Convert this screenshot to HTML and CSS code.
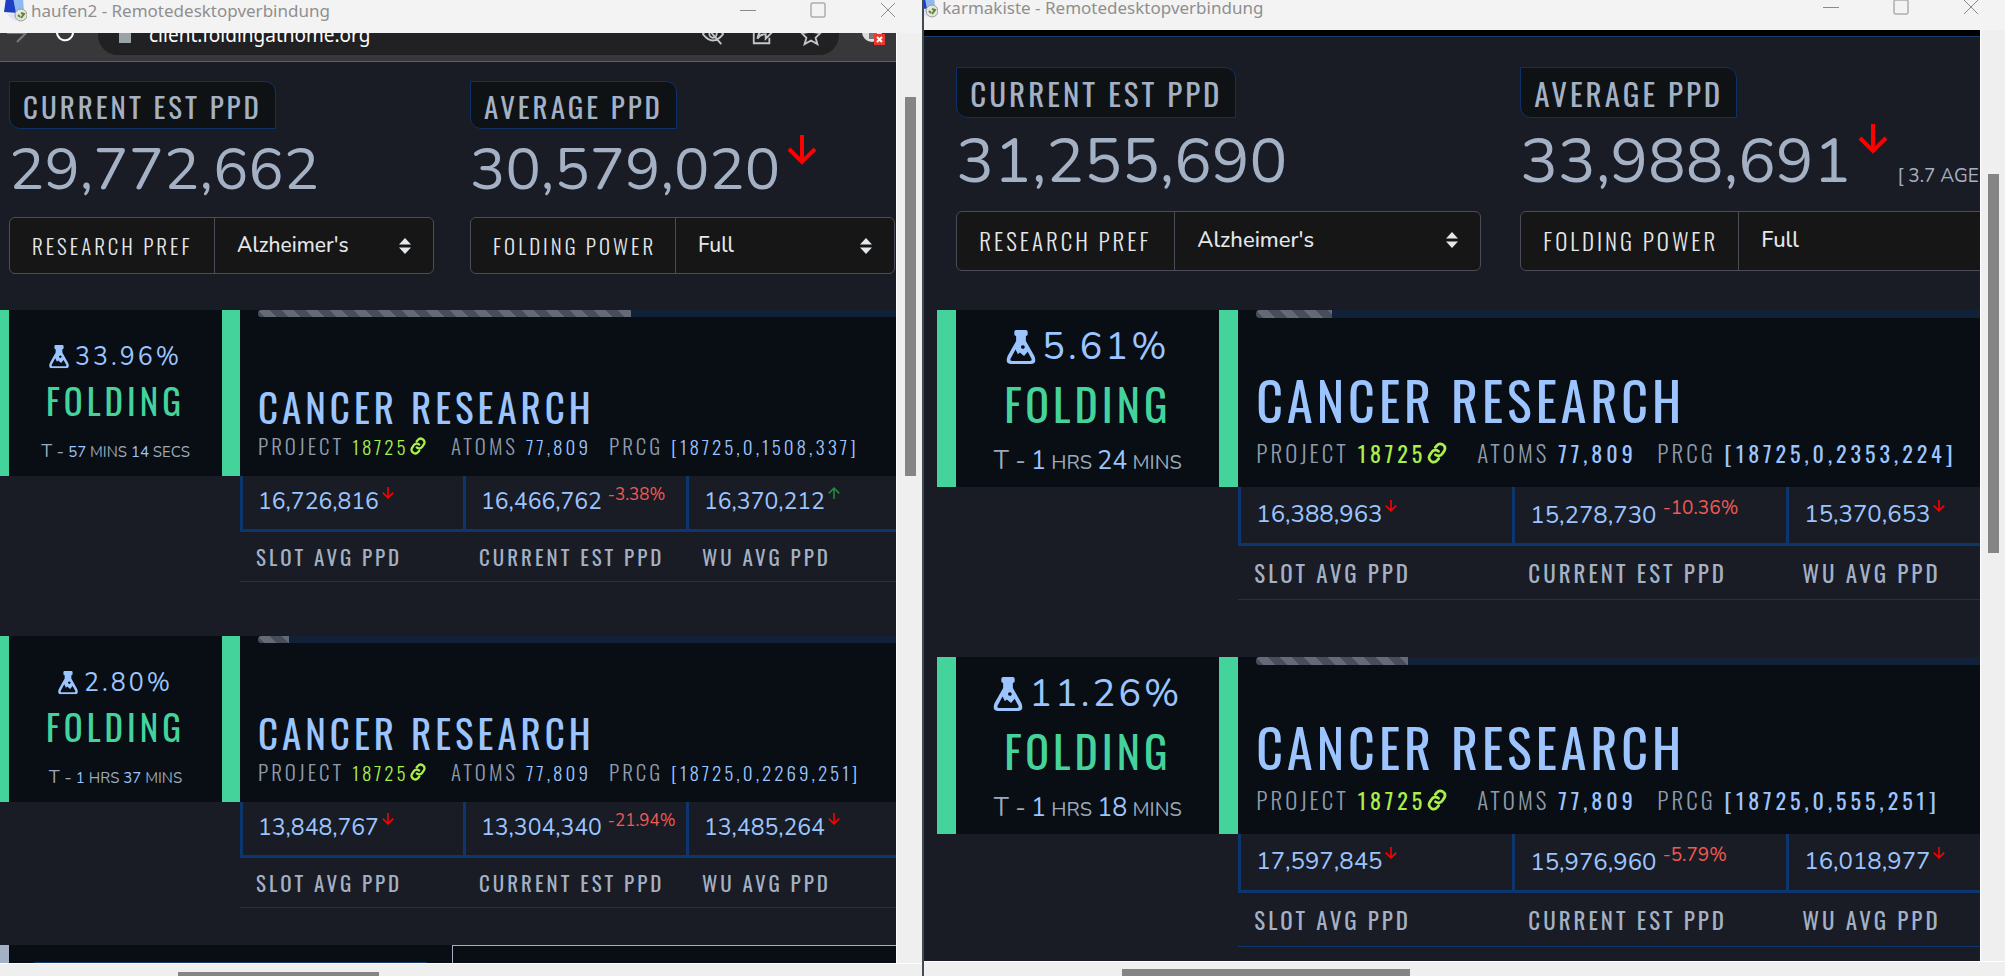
FILE: index.html
```
<!DOCTYPE html>
<html lang="de">

<head>
    <meta charset="UTF-8">
    <meta name="viewport" content="width=device-width, initial-scale=1.0">
    <title>Remotedesktopverbindung</title>
    <link rel="stylesheet" href="styles.css">
</head>

<body>
    <svg class="sprite" aria-hidden="true">
        <symbol id="flask" viewBox="0 0 24 28">
            <path fill-rule="evenodd" d="M8 0h8q1.500 0 1.500 1.500v2q0 1.500-1.500 1.500v4l7 12.500q2.500 6.500-3 6.500H4q-5.500 0-3-6.500L8 9V5Q6.500 5 6.500 3.500v-2Q6.500 0 8 0zM7.500 16l-4 7.500q-1 2 1.500 2h14q2.500 0 1.500-2l-3-5.500-3 3.500-3.500-3-1.500 1.500zM13.500 12.500a1.500 1.500 0 1 0 .1 0z" />
        </symbol>
        <symbol id="link" viewBox="0 0 24 24">
            <g fill="none" stroke="currentColor" stroke-width="3" stroke-linecap="round" transform="rotate(-12 12 12)">
                <path d="M10 13.500a5 5 0 0 0 7.500.5l3-3a5 5 0 0 0-7-7l-2 1.700" />
                <path d="M14 10.500a5 5 0 0 0-7.500-.5l-3 3a5 5 0 0 0 7 7l2-1.700" />
            </g>
        </symbol>
        <symbol id="arrow" viewBox="0 0 30 30">
            <path fill="none" stroke="currentColor" stroke-width="4" d="M15 0v27M2 14l13 13 13-13" />
        </symbol>
        <symbol id="sort" viewBox="0 0 12 16">
            <path d="M0 6.500L6 0l6 6.500zM0 9.500L6 16l6-6.500z" />
        </symbol>
        <symbol id="rdp" viewBox="0 0 24 24">
            <path fill="#dfe6f2" d="M4 17l9-3 8 5-9 4z" />
            <path fill="#1c3fc4" d="M3 0h9l3 15-14-1z" />
            <path fill="#8db9ee" d="M10 0h10l1 14-8 1z" />
            <circle cx="18" cy="17" r="6" fill="#e4e4e0" stroke="#9c9c98" />
            <path fill="none" stroke="#5a8a2c" stroke-width="2" d="M15 17l2 2M18 15l3 1-3 4" />
        </symbol>
        <symbol id="win-min" viewBox="0 0 16 16">
            <path fill="none" stroke="currentColor" d="M0 8.500h16" />
        </symbol>
        <symbol id="win-max" viewBox="0 0 16 16">
            <rect x="1" y="1" width="14" height="14" rx="1" fill="none" stroke="currentColor" />
        </symbol>
        <symbol id="win-close" viewBox="0 0 16 16">
            <path fill="none" stroke="currentColor" d="M1 1l14 14M15 1L1 15" />
        </symbol>
    </svg>

    <!-- haufen2 -->
    <section class="window haufen">
        <header class="titlebar">
            <svg class="app_icon"><use href="#rdp" /></svg>
            <h1>haufen2 - Remotedesktopverbindung</h1>
            <button type="button" aria-label="Minimieren"><svg><use href="#win-min" /></svg></button>
            <button type="button" aria-label="Maximieren"><svg><use href="#win-max" /></svg></button>
            <button type="button" aria-label="Schließen"><svg><use href="#win-close" /></svg></button>
        </header>
        <div class="viewport">
            <div class="toolbar">
                <svg class="forward" viewBox="0 0 20 20"><path d="M0 10h18M10 1l9 9-9 9" /></svg>
                <svg class="reload" viewBox="0 0 20 20"><path d="M18 10a8 8 0 1 1-3-7" /></svg>
                <div class="address">
                    <i class="lock"></i>
                    <span class="url">client.foldingathome.org</span>
                    <svg viewBox="0 0 24 24"><path d="M1 11q11-14 22 0Q12 25 1 11zM3 1l18 21" /><circle cx="12" cy="11" r="4" /></svg>
                    <svg viewBox="0 0 24 24"><path d="M9 4H3v17h17v-6M7 16q1-9 9-9V2l7 7-7 7v-5q-6 0-9 5z" /></svg>
                    <svg viewBox="0 0 24 24"><path d="M12 2l3 7 7 1-5 5 2 7-7-4-7 4 2-7-5-5 7-1z" /></svg>
                </div>
                <svg class="extension" viewBox="0 0 24 24">
                    <circle cx="11" cy="11" r="10" fill="#ddd" />
                    <path fill="#777" d="M8 4h8v14H8z" />
                    <path fill="#e33b32" d="M13 13h11v11H13z" />
                    <path stroke="#fff" stroke-width="2" d="M16 16l5 5M21 16l-5 5" />
                </svg>
            </div>
            <main class="page">
                <div class="summary">
                    <div>
                        <h2 class="tag">CURRENT EST PPD</h2>
                        <div class="total">29,772,662</div>
                        <div class="group">
                            <label for="pref1">RESEARCH PREF</label>
                            <div class="select">
                                <select id="pref1"><option>Alzheimer's</option></select>
                                <svg><use href="#sort" /></svg>
                            </div>
                        </div>
                    </div>
                    <div>
                        <h2 class="tag">AVERAGE PPD</h2>
                        <div class="total">30,579,020<svg class="down"><use href="#arrow" /></svg></div>
                        <div class="group">
                            <label for="power1">FOLDING POWER</label>
                            <div class="select">
                                <select id="power1"><option>Full</option></select>
                                <svg><use href="#sort" /></svg>
                            </div>
                        </div>
                    </div>
                </div>

                <article class="slot">
                    <div class="card">
                        <div class="status">
                            <div class="percent"><svg><use href="#flask" /></svg>33.96%</div>
                            <div class="state">FOLDING</div>
                            <div class="eta"><span>T -</span> <b>57</b> MINS <b>14</b> SECS</div>
                        </div>
                        <div class="work">
                            <div class="progress"><div style="width: 33.96%"></div></div>
                            <h3>CANCER RESEARCH</h3>
                            <div class="info">
                                <p>PROJECT <a href="#18725">18725<svg><use href="#link" /></svg></a></p>
                                <p>ATOMS <b>77,809</b></p>
                                <p>PRCG <b>[18725,0,1508,337]</b></p>
                            </div>
                        </div>
                    </div>
                    <table>
                        <tbody>
                            <tr>
                                <td>16,726,816<svg class="down"><use href="#arrow" /></svg></td>
                                <td>16,466,762 <sup>-3.38%</sup></td>
                                <td>16,370,212<svg class="up"><use href="#arrow" /></svg></td>
                            </tr>
                        </tbody>
                        <tfoot>
                            <tr>
                                <th>SLOT AVG PPD</th>
                                <th>CURRENT EST PPD</th>
                                <th>WU AVG PPD</th>
                            </tr>
                        </tfoot>
                    </table>
                </article>

                <article class="slot">
                    <div class="card">
                        <div class="status">
                            <div class="percent"><svg><use href="#flask" /></svg>2.80%</div>
                            <div class="state">FOLDING</div>
                            <div class="eta"><span>T -</span> <b>1</b> HRS <b>37</b> MINS</div>
                        </div>
                        <div class="work">
                            <div class="progress"><div style="width: 2.8%"></div></div>
                            <h3>CANCER RESEARCH</h3>
                            <div class="info">
                                <p>PROJECT <a href="#18725">18725<svg><use href="#link" /></svg></a></p>
                                <p>ATOMS <b>77,809</b></p>
                                <p>PRCG <b>[18725,0,2269,251]</b></p>
                            </div>
                        </div>
                    </div>
                    <table>
                        <tbody>
                            <tr>
                                <td>13,848,767<svg class="down"><use href="#arrow" /></svg></td>
                                <td>13,304,340 <sup>-21.94%</sup></td>
                                <td>13,485,264<svg class="down"><use href="#arrow" /></svg></td>
                            </tr>
                        </tbody>
                        <tfoot>
                            <tr>
                                <th>SLOT AVG PPD</th>
                                <th>CURRENT EST PPD</th>
                                <th>WU AVG PPD</th>
                            </tr>
                        </tfoot>
                    </table>
                </article>

                <div class="users">
                    <div class="user_left"><div class="user_box"></div></div>
                    <div class="user_right"></div>
                </div>
            </main>
        </div>
        <div class="scroll_y"><div class="thumb"></div></div>
        <div class="scroll_x"><div class="thumb"></div></div>
    </section>

    <!-- karmakiste -->
    <section class="window karma">
        <header class="titlebar">
            <svg class="app_icon"><use href="#rdp" /></svg>
            <h1>karmakiste - Remotedesktopverbindung</h1>
            <button type="button" aria-label="Minimieren"><svg><use href="#win-min" /></svg></button>
            <button type="button" aria-label="Maximieren"><svg><use href="#win-max" /></svg></button>
            <button type="button" aria-label="Schließen"><svg><use href="#win-close" /></svg></button>
        </header>
        <div class="viewport">
            <div class="navline"></div>
            <main class="page">
                <div class="summary">
                    <div>
                        <h2 class="tag">CURRENT EST PPD</h2>
                        <div class="total">31,255,690</div>
                        <div class="group">
                            <label for="pref2">RESEARCH PREF</label>
                            <div class="select">
                                <select id="pref2"><option>Alzheimer's</option></select>
                                <svg><use href="#sort" /></svg>
                            </div>
                        </div>
                    </div>
                    <div>
                        <h2 class="tag">AVERAGE PPD</h2>
                        <div class="total">33,988,691<svg class="down"><use href="#arrow" /></svg><small>[ 3.7 AGE ]</small></div>
                        <div class="group">
                            <label for="power2">FOLDING POWER</label>
                            <div class="select">
                                <select id="power2"><option>Full</option></select>
                                <svg><use href="#sort" /></svg>
                            </div>
                        </div>
                    </div>
                </div>

                <article class="slot">
                    <div class="card">
                        <div class="status">
                            <div class="percent"><svg><use href="#flask" /></svg>5.61%</div>
                            <div class="state">FOLDING</div>
                            <div class="eta"><span>T -</span> <b>1</b> HRS <b>24</b> MINS</div>
                        </div>
                        <div class="work">
                            <div class="progress"><div style="width: 5.61%"></div></div>
                            <h3>CANCER RESEARCH</h3>
                            <div class="info">
                                <p>PROJECT <a href="#18725">18725<svg><use href="#link" /></svg></a></p>
                                <p>ATOMS <b>77,809</b></p>
                                <p>PRCG <b>[18725,0,2353,224]</b></p>
                            </div>
                        </div>
                    </div>
                    <table>
                        <tbody>
                            <tr>
                                <td>16,388,963<svg class="down"><use href="#arrow" /></svg></td>
                                <td>15,278,730 <sup>-10.36%</sup></td>
                                <td>15,370,653<svg class="down"><use href="#arrow" /></svg></td>
                            </tr>
                        </tbody>
                        <tfoot>
                            <tr>
                                <th>SLOT AVG PPD</th>
                                <th>CURRENT EST PPD</th>
                                <th>WU AVG PPD</th>
                            </tr>
                        </tfoot>
                    </table>
                </article>

                <article class="slot">
                    <div class="card">
                        <div class="status">
                            <div class="percent"><svg><use href="#flask" /></svg>11.26%</div>
                            <div class="state">FOLDING</div>
                            <div class="eta"><span>T -</span> <b>1</b> HRS <b>18</b> MINS</div>
                        </div>
                        <div class="work">
                            <div class="progress"><div style="width: 11.26%"></div></div>
                            <h3>CANCER RESEARCH</h3>
                            <div class="info">
                                <p>PROJECT <a href="#18725">18725<svg><use href="#link" /></svg></a></p>
                                <p>ATOMS <b>77,809</b></p>
                                <p>PRCG <b>[18725,0,555,251]</b></p>
                            </div>
                        </div>
                    </div>
                    <table>
                        <tbody>
                            <tr>
                                <td>17,597,845<svg class="down"><use href="#arrow" /></svg></td>
                                <td>15,976,960 <sup>-5.79%</sup></td>
                                <td>16,018,977<svg class="down"><use href="#arrow" /></svg></td>
                            </tr>
                        </tbody>
                        <tfoot>
                            <tr>
                                <th>SLOT AVG PPD</th>
                                <th>CURRENT EST PPD</th>
                                <th>WU AVG PPD</th>
                            </tr>
                        </tfoot>
                    </table>
                </article>
            </main>
        </div>
        <div class="scroll_y"><div class="thumb"></div></div>
        <div class="scroll_x"><div class="thumb"></div></div>
    </section>
</body>

</html>
```
FILE: styles.css
```
* {
    margin: 0;
    padding: 0;
    box-sizing: border-box;
}

body {
    display: grid;
    grid-template-columns: 46fr 54fr;
    height: 100vh;
    overflow: hidden;
    background-color: #efefef;
    font-family: Nunito, Lato, "Open Sans", sans-serif;
}

h1,
h2,
h3,
b,
th {
    font-weight: normal;
}

svg {
    fill: currentColor;
    flex: none;
}

.sprite {
    position: absolute;
    width: 0;
    height: 0;
}

/* sizes: the two remote desktops run at a different zoom */
.haufen {
    --tag: 29px;
    --tag-height: 48px;
    --total: 59px;
    --total-line: 82px;
    --total-gap: 6px;
    --group-width: 425px;
    --group-height: 57px;
    --group-gap: 36px;
    --label: 21px;
    --label-width: 205px;
    --select: 21px;
    --edge: 9px;
    --bar: 18px;
    --status-width: 240px;
    --card-height: 166px;
    --status-top: 32px;
    --percent: 25px;
    --percent-line: 30px;
    --flask: 20px;
    --state: 35px;
    --state-line: 56px;
    --eta: 15px;
    --eta-big: 15px;
    --eta-line: 46px;
    --title: 39px;
    --title-line: 48px;
    --info: 21px;
    --info-value: 19px;
    --info-weight: 300;
    --info-space: 3px;
    --info-gap: 8px;
    --info-line: 32px;
    --info-project: 193px;
    --info-atoms: 158px;
    --link: 18px;
    --progress: 7px;
    --stat: 23px;
    --stat-height: 56px;
    --change: 17px;
    --head: 21px;
    --head-height: 50px;
    --column: 223px;
    --slot-gap: 54px;
}

.karma {
    --tag: 31px;
    --tag-height: 51px;
    --total: 63px;
    --total-line: 86px;
    --total-gap: 7px;
    --group-width: 525px;
    --group-height: 60px;
    --group-gap: 39px;
    --label: 23px;
    --label-width: 218px;
    --select: 22px;
    --edge: 19px;
    --bar: 19px;
    --status-width: 301px;
    --card-height: 177px;
    --status-top: 12px;
    --percent: 38px;
    --percent-line: 50px;
    --flask: 30px;
    --state: 44px;
    --state-line: 64px;
    --eta: 20px;
    --eta-big: 25px;
    --eta-line: 50px;
    --title: 52px;
    --title-line: 66px;
    --info: 23px;
    --info-value: 22px;
    --info-weight: 400;
    --info-space: 4px;
    --info-gap: 9px;
    --info-line: 40px;
    --info-project: 221px;
    --info-atoms: 180px;
    --link: 22px;
    --progress: 8px;
    --stat: 24px;
    --stat-height: 59px;
    --change: 19px;
    --head: 23px;
    --head-height: 54px;
    --column: 274px;
    --slot-gap: 57px;
}

/* window frame */
.window {
    display: grid;
    min-width: 0;
    height: 100vh;
}

.haufen {
    grid-template: 33px 1fr 13px / 1fr 26px;
}

.karma {
    grid-template: 30px 1fr 15px / 1fr 25px;
    border-left: 2px solid #434a50;
}

.titlebar {
    grid-column: 1 / 3;
    display: flex;
    align-items: flex-start;
    overflow: hidden;
    background-color: #f3f3f3;
    color: #8f8f8f;
    font-family: "Segoe UI", "Noto Sans", sans-serif;
}

.titlebar h1 {
    flex: 1;
    font-size: 17px;
    line-height: 22px;
    white-space: nowrap;
}

.app_icon {
    width: 24px;
    height: 24px;
    margin: -2px 4px 0 3px;
}

.titlebar button {
    width: 16px;
    height: 16px;
    margin-left: 54px;
    margin-top: 2px;
    border: 0;
    background: none;
    color: #8a8a8a;
}

.titlebar button svg {
    display: block;
    width: 16px;
    height: 16px;
}

.titlebar button:last-child {
    margin-right: 26px;
}

.karma .titlebar h1 {
    line-height: 16px;
}

.karma .app_icon {
    margin: -6px 4px 0 -10px;
}

.karma .titlebar button {
    margin-top: -1px;
}

.viewport {
    min-width: 0;
    min-height: 0;
    overflow: hidden;
    background-color: #191c24;
}

.scroll_y {
    padding-left: 8px;
    border-left: 1px solid #fff;
}

.scroll_y .thumb {
    width: 11px;
    height: 379px;
    margin-top: 64px;
    background-color: #858585;
}

.karma .scroll_y {
    padding-left: 7px;
}

.karma .scroll_y .thumb {
    margin-top: 144px;
}

.scroll_x {
    grid-column: 1 / 3;
    padding-top: 8px;
    border-top: 1px solid #fff;
}

.scroll_x .thumb {
    width: 201px;
    height: 100%;
    margin-left: 178px;
    background-color: #858585;
}

.karma .scroll_x {
    padding-top: 7px;
}

.karma .scroll_x .thumb {
    width: 288px;
    margin-left: 198px;
}

/* browser toolbar */
.toolbar {
    display: flex;
    align-items: flex-end;
    height: 29px;
    padding: 0 11px 6px 7px;
    overflow: hidden;
    border-bottom: 1px solid #5f6061;
    background-color: #38383a;
}

.toolbar svg {
    fill: none;
    stroke: #c4c7c8;
    stroke-width: 2;
}

.toolbar .forward {
    width: 20px;
    height: 20px;
    margin: 0 28px 12px 0;
    stroke: #77797b;
}

.toolbar .reload {
    width: 20px;
    height: 20px;
    margin: 0 23px 12px 0;
    stroke: #fff;
}

.address {
    flex: 1;
    display: flex;
    align-items: center;
    height: 40px;
    padding: 0 17px 0 21px;
    border-radius: 20px;
    background-color: #212123;
}

.address svg {
    width: 22px;
    height: 22px;
    margin-left: 27px;
}

.lock {
    width: 12px;
    height: 16px;
    margin-right: 18px;
    background-color: #9aa3a6;
}

.url {
    flex: 1;
    color: #fff;
    font-family: "Segoe UI", "Noto Sans", sans-serif;
    font-size: 19px;
}

.toolbar .extension {
    width: 24px;
    height: 24px;
    margin: 0 0 10px 22px;
    stroke: none;
}

.navline {
    height: 7px;
    border-bottom: 1px solid #173c6e;
    background-color: #000;
}

/* client page, wider than the window that shows it */
.page {
    min-width: 1356px;
    padding-top: 19px;
}

.karma .page {
    min-width: 1675px;
    padding: 30px 0 0 13px;
}

.summary {
    display: grid;
    grid-template-columns: var(--group-width) var(--group-width);
    gap: var(--group-gap);
    padding-left: 9px;
    margin-bottom: var(--group-gap);
}

.karma .summary {
    padding-left: 19px;
}

.tag,
.group label,
.state,
.work h3,
.info,
th {
    font-family: Oswald, "Liberation Sans Narrow", "Liberation Sans", sans-serif;
    white-space: nowrap;
}

.tag {
    width: fit-content;
    height: var(--tag-height);
    padding: 0 13px;
    border: 1px solid #0d3168;
    border-radius: 0 11px;
    background-color: #0e1215;
    color: #a4b1c4;
    font-size: var(--tag);
    line-height: var(--tag-height);
    letter-spacing: 3px;
}

.total {
    display: flex;
    align-items: flex-start;
    height: var(--total-line);
    margin-bottom: var(--total-gap);
    color: #a4b1c4;
    font-size: var(--total);
    line-height: var(--total-line);
    white-space: nowrap;
}

.down {
    color: #f00;
}

.up {
    color: #1f8a3d;
    transform: rotate(180deg);
}

.total .down {
    width: 30px;
    height: 30px;
    margin: 6px 0 0 7px;
}

.total small {
    margin-left: 9px;
    padding-top: 38px;
    font-size: 19px;
    line-height: 40px;
}

.group {
    display: flex;
    height: var(--group-height);
    border: 1px solid #484d58;
    border-radius: 6px;
    background-color: #161616;
    color: #e4e8ea;
}

.group label {
    display: flex;
    align-items: center;
    width: var(--label-width);
    padding-left: 22px;
    border-right: 1px solid #484d58;
    font-size: var(--label);
    font-weight: 300;
    letter-spacing: 3px;
}

.select {
    position: relative;
    flex: 1;
}

.select select {
    width: 100%;
    height: 100%;
    padding: 0 44px 2px 22px;
    border: 0;
    background: none;
    color: inherit;
    font-family: inherit;
    font-size: var(--select);
    font-weight: 500;
    appearance: none;
}

.select svg {
    position: absolute;
    top: 20px;
    right: 22px;
    width: 12px;
    height: 16px;
    pointer-events: none;
}

/* folding slots */
.slot + .slot {
    margin-top: var(--slot-gap);
}

.card {
    display: flex;
    height: var(--card-height);
    background-color: #080e14;
}

.status {
    flex: none;
    width: var(--status-width);
    padding-top: var(--status-top);
    border-left: var(--edge) solid #45d39c;
    border-right: var(--bar) solid #45d39c;
    text-align: center;
    color: #9da9b9;
}

.percent {
    display: flex;
    align-items: center;
    justify-content: center;
    gap: 6px;
    color: #9cc5ff;
    font-size: var(--percent);
    line-height: var(--percent-line);
    letter-spacing: 3px;
}

.percent svg {
    width: var(--flask);
    height: 100%;
    max-height: 34px;
    aspect-ratio: 24 / 28;
}

.state {
    color: #45d39c;
    font-size: var(--state);
    line-height: var(--state-line);
    letter-spacing: 4px;
}

.eta {
    font-size: var(--eta);
    line-height: var(--eta-line);
    white-space: nowrap;
}

.eta b {
    color: #9cc5ff;
    font-size: var(--eta-big);
}

.eta span {
    font-size: var(--eta-big);
}

.haufen .eta span {
    font-size: 18px;
}

.work {
    flex: 1;
    display: flex;
    flex-direction: column;
    padding: 0 0 14px 18px;
}

.progress {
    height: var(--progress);
    margin-bottom: auto;
    overflow: hidden;
    border-radius: 4px 0 0 4px;
    background-color: #112138;
}

.progress div {
    height: 100%;
    background: linear-gradient(45deg, #646b76 25%, #474d59 25%, #474d59 50%, #646b76 50%, #646b76 75%, #474d59 75%) 0 0 / 24px 24px;
}

.work h3 {
    color: #9cc5ff;
    font-size: var(--title);
    line-height: var(--title-line);
    letter-spacing: 4px;
}

.info {
    display: flex;
    color: #8f9bab;
    font-size: var(--info);
    font-weight: 300;
    line-height: var(--info-line);
    letter-spacing: 3px;
}

.info p {
    display: flex;
    gap: var(--info-gap);
}

.info p:nth-child(1) {
    width: var(--info-project);
}

.info p:nth-child(2) {
    width: var(--info-atoms);
}

.info b,
.info a {
    color: #9cc5ff;
    font-size: var(--info-value);
    font-weight: var(--info-weight);
    letter-spacing: var(--info-space);
}

.info a {
    display: flex;
    align-items: center;
    color: #a9f04b;
    text-decoration: none;
}

.info a svg {
    width: var(--link);
    height: var(--link);
}

table {
    table-layout: fixed;
    width: calc(var(--column) * 3);
    margin-left: var(--status-width);
    border-spacing: 0;
}

td {
    height: var(--stat-height);
    padding: 0 0 2px 15px;
    border-left: 3px solid #0d366e;
    border-bottom: 3px solid #0d366e;
    color: #9cc5ff;
    font-size: var(--stat);
    line-height: 30px;
    white-space: nowrap;
}

td svg {
    width: 12px;
    height: 12px;
    margin: 0 0 10px 3px;
}

sup {
    color: #ee5a54;
    font-size: var(--change);
    line-height: 1;
    vertical-align: 9px;
}

th {
    height: var(--head-height);
    padding-left: 16px;
    border-bottom: 1px solid #0d366e;
    color: #a4b1c4;
    font-size: var(--head);
    text-align: left;
    letter-spacing: 3px;
}

/* next section, only its top edge is in view */
.users {
    display: flex;
    height: 120px;
    margin-top: 37px;
    border-left: 9px solid #a4b1c4;
    background-color: #080e14;
}

.user_left {
    width: 443px;
    padding: 17px 21px 0;
}

.user_box {
    height: 60px;
    border: 1px solid #173c6e;
    border-radius: 6px;
}

.user_right {
    flex: 1;
    border: 1px solid #a4b1c4;
}
```
